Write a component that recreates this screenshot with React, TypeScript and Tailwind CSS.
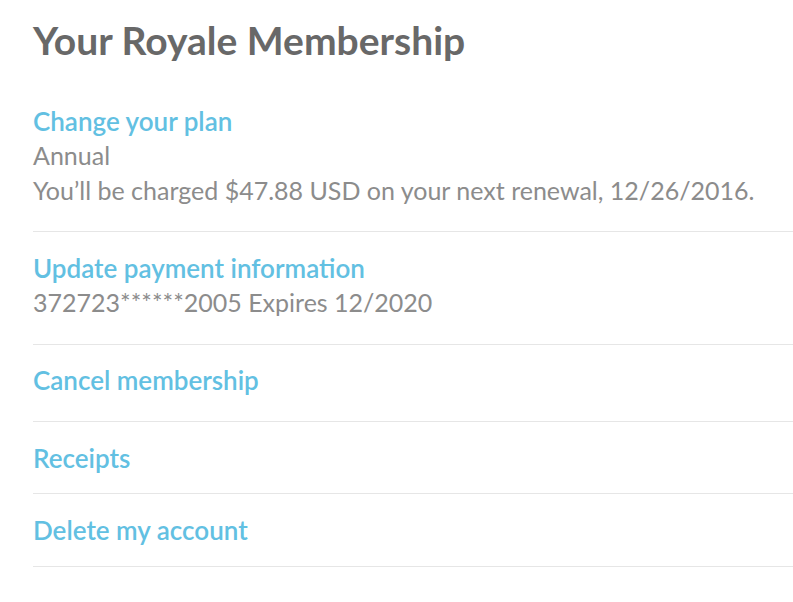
export default function App() {
  const rows = [
    {
      link: "Change your plan",
      lines: ["Annual", "You’ll be charged $47.88 USD on your next renewal, 12/26/2016."],
      pad: "pt-0 pb-[23px]",
    },
    { link: "Update payment information", lines: ["372723******2005 Expires 12/2020"], pad: "pt-[19px] pb-[24px]" },
    { link: "Cancel membership", lines: [], pad: "pt-[18px] pb-[24px]" },
    { link: "Receipts", lines: [], pad: "pt-[19px] pb-[18px]" },
    { link: "Delete my account", lines: [], pad: "pt-[19px] pb-[19px]" },
  ];

  return (
    <div className="min-h-[602px] bg-white pl-[33px] pt-[16px]" style={{ fontFamily: "Lato, 'Open Sans', sans-serif" }}>
      <h1 className="text-[39px] leading-[48px] font-bold text-[#686868]">Your Royale Membership</h1>

      <div className="mt-[40px]">
        {rows.map(r => (
          <div key={r.link} className={`border-b border-[#e6e6e6] ${r.pad}`}>
            <a className="block text-[26px] leading-[34px] font-semibold text-[#62c0e2] cursor-pointer">{r.link}</a>
            {r.lines.map(l => (
              <p key={l} className="text-[25px] leading-[35px] text-[#8c8c8c]">{l}</p>
            ))}
          </div>
        ))}
      </div>
    </div>
  );
}
